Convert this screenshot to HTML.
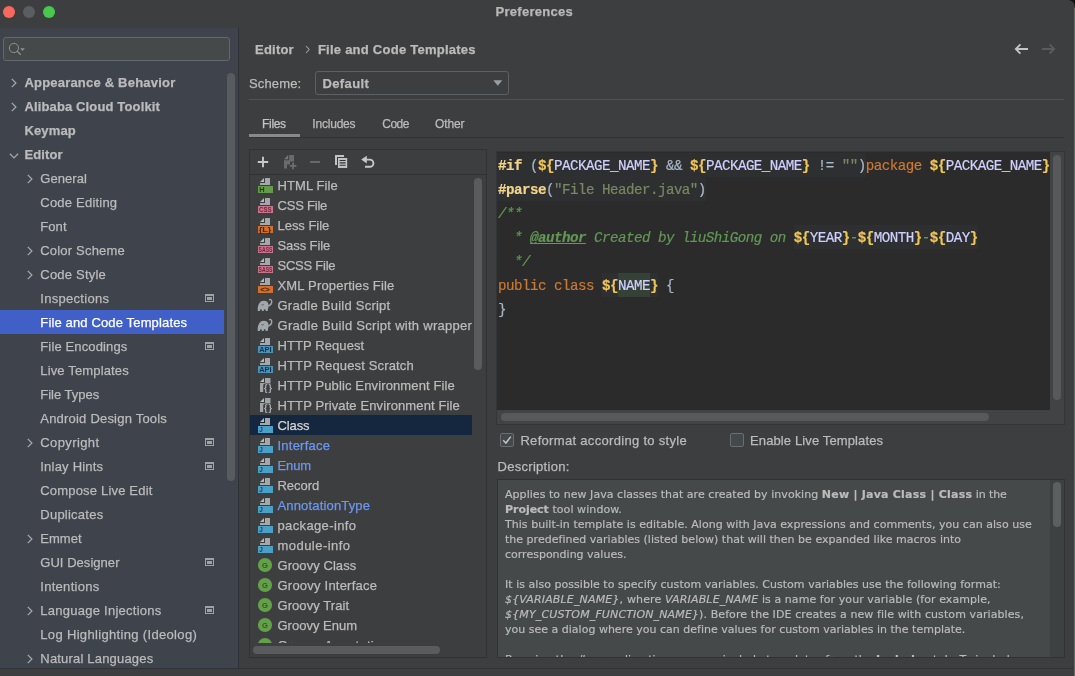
<!DOCTYPE html><html><head><meta charset="utf-8"><title>Preferences</title><style>
html,body{margin:0;padding:0}
body{width:1075px;height:676px;overflow:hidden;position:relative;background:#3d3e40;color:#bbbbbb;font-family:"Liberation Sans",sans-serif;font-size:13px}
#w{position:absolute;left:0;top:0;width:1075px;height:676px;overflow:hidden;will-change:transform;background:#3d3e40}
.t{position:absolute;white-space:pre;-webkit-text-stroke:0.25px currentColor}
.a{position:absolute}
svg{position:absolute;overflow:visible}
.code,.d{-webkit-text-stroke:0.2px currentColor}
.code{font-family:"Liberation Mono",monospace;font-size:14.2px;letter-spacing:-0.52px;line-height:24px;color:#a9b7c6;position:absolute;white-space:pre;left:498px}
.code b{font-weight:bold}
.d{position:absolute;white-space:pre;font-family:"DejaVu Sans",sans-serif;font-size:11px;line-height:15px;color:#bbbbbb;left:505px}
.y{color:#f0c55a;font-weight:bold}.dr{color:#f3d58a;font-weight:bold}.v{color:#d0d0ff}.s{color:#7a8760}.k{color:#cc7832}.c{color:#629755;font-style:italic}
</style></head><body><div id="w">
<div class="a" style="left:3px;top:6px;width:12px;height:12px;border-radius:6px;background:#f8695d"></div>
<div class="a" style="left:23px;top:6px;width:12px;height:12px;border-radius:6px;background:#5c5d60"></div>
<div class="a" style="left:43px;top:6px;width:12px;height:12px;border-radius:6px;background:#48c84e"></div>
<div class="t " style="left:495.5px;top:2.0px;line-height:20px;letter-spacing:0.278px;font-weight:bold;color:#b8b8b8;">Preferences</div>
<div class="a" style="left:0;top:28px;width:238px;height:640px;background:#3e434c"></div>
<div class="a" style="left:238px;top:28px;width:1px;height:640px;background:#2f3235"></div>
<div class="a" style="left:3px;top:37px;width:225px;height:22px;border:1px solid #65686b;border-radius:3px;background:#45494a"></div>
<svg style="left:6px;top:40px" width="22" height="18" viewBox="0 0 22 18"><circle cx="7.9" cy="8" r="4.6" fill="none" stroke="#8f9295" stroke-width="1"/><path d="M11.2 11.3 L14.8 14.8" stroke="#8f9295" stroke-width="1.2" fill="none"/><path d="M14.2 8.2 h4.6 l-2.3 2.8z" fill="#8f9295"/></svg>
<svg style="left:11px;top:78px" width="6" height="10" viewBox="0 0 6 10"><path d="M0.8 0.9 L4.9 5 L0.8 9.1" fill="none" stroke="#a3a7ab" stroke-width="1.3"/></svg>
<div class="t " style="left:24.4px;top:70.5px;line-height:24px;letter-spacing:0.207px;font-weight:bold;">Appearance &amp; Behavior</div>
<svg style="left:11px;top:102px" width="6" height="10" viewBox="0 0 6 10"><path d="M0.8 0.9 L4.9 5 L0.8 9.1" fill="none" stroke="#a3a7ab" stroke-width="1.3"/></svg>
<div class="t " style="left:24.4px;top:94.5px;line-height:24px;letter-spacing:0.141px;font-weight:bold;">Alibaba Cloud Toolkit</div>
<div class="t " style="left:24.4px;top:118.5px;line-height:24px;letter-spacing:0.154px;font-weight:bold;">Keymap</div>
<svg style="left:8.8px;top:153px" width="10" height="6" viewBox="0 0 10 6"><path d="M0.9 0.8 L5 4.9 L9.1 0.8" fill="none" stroke="#a3a7ab" stroke-width="1.3"/></svg>
<div class="t " style="left:24.4px;top:142.5px;line-height:24px;letter-spacing:0.108px;font-weight:bold;">Editor</div>
<svg style="left:27px;top:174px" width="6" height="10" viewBox="0 0 6 10"><path d="M0.8 0.9 L4.9 5 L0.8 9.1" fill="none" stroke="#a3a7ab" stroke-width="1.3"/></svg>
<div class="t " style="left:40.3px;top:166.5px;line-height:24px;letter-spacing:0.050px;">General</div>
<div class="t " style="left:40.3px;top:190.5px;line-height:24px;letter-spacing:0.213px;">Code Editing</div>
<div class="t " style="left:40.3px;top:214.5px;line-height:24px;letter-spacing:0.072px;">Font</div>
<svg style="left:27px;top:246px" width="6" height="10" viewBox="0 0 6 10"><path d="M0.8 0.9 L4.9 5 L0.8 9.1" fill="none" stroke="#a3a7ab" stroke-width="1.3"/></svg>
<div class="t " style="left:40.3px;top:238.5px;line-height:24px;letter-spacing:0.186px;">Color Scheme</div>
<svg style="left:27px;top:270px" width="6" height="10" viewBox="0 0 6 10"><path d="M0.8 0.9 L4.9 5 L0.8 9.1" fill="none" stroke="#a3a7ab" stroke-width="1.3"/></svg>
<div class="t " style="left:40.3px;top:262.5px;line-height:24px;letter-spacing:0.211px;">Code Style</div>
<div class="t " style="left:40.3px;top:286.5px;line-height:24px;letter-spacing:0.294px;">Inspections</div>
<svg style="left:205px;top:294px" width="9" height="8" viewBox="0 0 9 8"><rect width="9" height="8" fill="#9da2a8"/><rect x="1" y="2" width="7" height="5" fill="#3e434c"/><rect x="2" y="3" width="5" height="3" fill="#9da2a8"/></svg>
<div class="a" style="left:0;top:310px;width:224px;height:24px;background:#4060c8"></div>
<div class="t " style="left:40.3px;top:310.5px;line-height:24px;letter-spacing:0.143px;color:#ffffff;">File and Code Templates</div>
<div class="t " style="left:40.3px;top:334.5px;line-height:24px;letter-spacing:0.131px;">File Encodings</div>
<svg style="left:205px;top:342px" width="9" height="8" viewBox="0 0 9 8"><rect width="9" height="8" fill="#9da2a8"/><rect x="1" y="2" width="7" height="5" fill="#3e434c"/><rect x="2" y="3" width="5" height="3" fill="#9da2a8"/></svg>
<div class="t " style="left:40.3px;top:358.5px;line-height:24px;letter-spacing:0.149px;">Live Templates</div>
<div class="t " style="left:40.3px;top:382.5px;line-height:24px;letter-spacing:-0.004px;">File Types</div>
<div class="t " style="left:40.3px;top:406.5px;line-height:24px;letter-spacing:0.208px;">Android Design Tools</div>
<svg style="left:27px;top:438px" width="6" height="10" viewBox="0 0 6 10"><path d="M0.8 0.9 L4.9 5 L0.8 9.1" fill="none" stroke="#a3a7ab" stroke-width="1.3"/></svg>
<div class="t " style="left:40.3px;top:430.5px;line-height:24px;letter-spacing:0.396px;">Copyright</div>
<svg style="left:205px;top:438px" width="9" height="8" viewBox="0 0 9 8"><rect width="9" height="8" fill="#9da2a8"/><rect x="1" y="2" width="7" height="5" fill="#3e434c"/><rect x="2" y="3" width="5" height="3" fill="#9da2a8"/></svg>
<div class="t " style="left:40.3px;top:454.5px;line-height:24px;letter-spacing:0.210px;">Inlay Hints</div>
<svg style="left:205px;top:462px" width="9" height="8" viewBox="0 0 9 8"><rect width="9" height="8" fill="#9da2a8"/><rect x="1" y="2" width="7" height="5" fill="#3e434c"/><rect x="2" y="3" width="5" height="3" fill="#9da2a8"/></svg>
<div class="t " style="left:40.3px;top:478.5px;line-height:24px;letter-spacing:0.182px;">Compose Live Edit</div>
<div class="t " style="left:40.3px;top:502.5px;line-height:24px;letter-spacing:0.240px;">Duplicates</div>
<svg style="left:27px;top:534px" width="6" height="10" viewBox="0 0 6 10"><path d="M0.8 0.9 L4.9 5 L0.8 9.1" fill="none" stroke="#a3a7ab" stroke-width="1.3"/></svg>
<div class="t " style="left:40.3px;top:526.5px;line-height:24px;letter-spacing:0.006px;">Emmet</div>
<div class="t " style="left:40.3px;top:550.5px;line-height:24px;letter-spacing:0.038px;">GUI Designer</div>
<svg style="left:205px;top:558px" width="9" height="8" viewBox="0 0 9 8"><rect width="9" height="8" fill="#9da2a8"/><rect x="1" y="2" width="7" height="5" fill="#3e434c"/><rect x="2" y="3" width="5" height="3" fill="#9da2a8"/></svg>
<div class="t " style="left:40.3px;top:574.5px;line-height:24px;letter-spacing:0.283px;">Intentions</div>
<svg style="left:27px;top:606px" width="6" height="10" viewBox="0 0 6 10"><path d="M0.8 0.9 L4.9 5 L0.8 9.1" fill="none" stroke="#a3a7ab" stroke-width="1.3"/></svg>
<div class="t " style="left:40.3px;top:598.5px;line-height:24px;letter-spacing:0.254px;">Language Injections</div>
<svg style="left:205px;top:606px" width="9" height="8" viewBox="0 0 9 8"><rect width="9" height="8" fill="#9da2a8"/><rect x="1" y="2" width="7" height="5" fill="#3e434c"/><rect x="2" y="3" width="5" height="3" fill="#9da2a8"/></svg>
<div class="t " style="left:40.3px;top:622.5px;line-height:24px;letter-spacing:0.333px;">Log Highlighting (Ideolog)</div>
<svg style="left:27px;top:654px" width="6" height="10" viewBox="0 0 6 10"><path d="M0.8 0.9 L4.9 5 L0.8 9.1" fill="none" stroke="#a3a7ab" stroke-width="1.3"/></svg>
<div class="t " style="left:40.3px;top:646.5px;line-height:24px;letter-spacing:0.191px;">Natural Languages</div>
<div class="a" style="left:227px;top:73px;width:8px;height:408px;border-radius:4px;background:#585b60"></div>
<div class="a" style="left:0;top:668px;width:1075px;height:1px;background:#323537"></div>
<div class="a" style="left:0;top:669px;width:1075px;height:7px;background:#3d3e40"></div>
<div class="t " style="left:255.1px;top:40.2px;line-height:20px;letter-spacing:0.191px;font-weight:bold;">Editor</div>
<svg style="left:304.5px;top:45px" width="6" height="9" viewBox="0 0 6 9"><path d="M1 1 L4.2 4.5 L1 8" fill="none" stroke="#a0a0a0" stroke-width="1.1"/></svg>
<div class="t " style="left:317.9px;top:40.2px;line-height:20px;letter-spacing:0.249px;font-weight:bold;">File and Code Templates</div>
<svg style="left:1014px;top:43px" width="16" height="12" viewBox="0 0 16 12"><path d="M14 6 H2 M6.4 1.4 L1.8 6 L6.4 10.6" fill="none" stroke="#c4c4c4" stroke-width="1.8"/></svg>
<svg style="left:1041px;top:43px" width="16" height="12" viewBox="0 0 16 12"><path d="M1 6 H13 M8.6 1.4 L13.2 6 L8.6 10.6" fill="none" stroke="#5a5c5e" stroke-width="1.8"/></svg>
<div class="t " style="left:249.0px;top:74.0px;line-height:20px;letter-spacing:0.143px;">Scheme:</div>
<div class="a" style="left:315px;top:71px;width:192px;height:22px;border:1px solid #5e6163;border-radius:3px;background:#3d3e40"></div>
<div class="t " style="left:322.5px;top:74.0px;line-height:20px;letter-spacing:0.377px;font-weight:bold;">Default</div>
<svg style="left:493px;top:80px" width="10" height="6" viewBox="0 0 10 6"><path d="M0.3 0.3 H9.3 L4.8 5.8z" fill="#9a9d9f"/></svg>
<div class="a" style="left:249px;top:99px;width:815px;height:1px;background:#505355"></div>
<div class="t " style="left:262.1px;top:113.5px;line-height:20px;letter-spacing:-0.327px;font-size:12px;color:#c4c4c4;">Files</div>
<div class="t " style="left:312.3px;top:113.5px;line-height:20px;letter-spacing:-0.199px;font-size:12px;">Includes</div>
<div class="t " style="left:382.3px;top:113.5px;line-height:20px;letter-spacing:-0.522px;font-size:12px;">Code</div>
<div class="t " style="left:435.1px;top:113.5px;line-height:20px;letter-spacing:-0.182px;font-size:12px;">Other</div>
<div class="a" style="left:249px;top:137px;width:815px;height:1px;background:#323232"></div>
<div class="a" style="left:249px;top:134px;width:51px;height:3px;background:#87898b"></div>
<div class="a" style="left:249px;top:149px;width:236px;height:507px;border:1px solid #323232;background:#3d3e40"></div>
<div class="a" style="left:250px;top:174px;width:236px;height:1px;background:#323232"></div>
<svg style="left:256px;top:155px" width="14" height="14" viewBox="0 0 14 14"><path d="M7 1.8 V12.2 M1.8 7 H12.2" stroke="#c8c8c8" stroke-width="1.9" fill="none"/></svg>
<svg style="left:283px;top:154px" width="16" height="16" viewBox="0 0 16 16"><path d="M5.2 1 L1 5.2 h4.2z" fill="#77797b"/><path d="M6.2 1 h4.8 v6.5 h-4 v3 h-3 v4 h-3 v-8.3 h5.2z" fill="#696b6d"/><path d="M10.1 8.6 v6.6 M6.8 11.9 h6.6" stroke="#6c6e70" stroke-width="1.8" fill="none"/></svg>
<div class="a" style="left:310px;top:161px;width:10px;height:2px;background:#66686a"></div>
<svg style="left:334px;top:154px" width="14" height="15" viewBox="0 0 14 15"><path d="M1 1 h9 v2 h-7 v8 h-2z" fill="#c2c2c2"/><rect x="4" y="4" width="9.2" height="10" fill="#c2c2c2"/><path d="M5.6 6.5 h6 M5.6 8.9 h6 M5.6 11.3 h6" stroke="#303133" stroke-width="1.1"/></svg>
<svg style="left:360px;top:154px" width="16" height="15" viewBox="0 0 16 15"><path d="M6 5.6 H9.8 A3.6 3.6 0 0 1 9.8 12.8 H5" fill="none" stroke="#c8c8c8" stroke-width="1.9"/><path d="M1.2 5.6 L6.8 1.7 V9.5z" fill="#c8c8c8"/></svg>
<div class="a" style="left:250px;top:175px;width:236px;height:468px;overflow:hidden">
<svg style="left:7px;top:2px" width="16" height="16" viewBox="0 0 16 16"><path d="M7 1 L3 5 h4z" fill="#b6babd"/><path d="M8 1 v5 h-5 v2 h10 v-7z" fill="#a4a8ab"/><rect x="1" y="9" width="15" height="7" fill="#649b4b"/><text x="2.2" y="15.3" font-family="Liberation Sans, sans-serif" font-weight="bold" font-size="7.4" fill="#1c4512">H</text></svg>
<div class="t" style="left:27.5px;top:1.0px;line-height:20px;letter-spacing:0.084px;">HTML File</div>
<svg style="left:7px;top:22px" width="16" height="16" viewBox="0 0 16 16"><path d="M7 1 L3 5 h4z" fill="#b6babd"/><path d="M8 1 v5 h-5 v2 h10 v-7z" fill="#a4a8ab"/><rect x="1" y="9" width="15" height="7" fill="#c7768a"/><text x="2" y="15.3" font-family="Liberation Sans, sans-serif" font-weight="bold" font-size="7.4" textLength="12.6" lengthAdjust="spacingAndGlyphs" fill="#7a1f3a">CSS</text></svg>
<div class="t" style="left:27.5px;top:21.0px;line-height:20px;letter-spacing:-0.211px;">CSS File</div>
<svg style="left:7px;top:42px" width="16" height="16" viewBox="0 0 16 16"><path d="M7 1 L3 5 h4z" fill="#b6babd"/><path d="M8 1 v5 h-5 v2 h10 v-7z" fill="#a4a8ab"/><rect x="1" y="9" width="15" height="7" fill="#cf7030"/><text x="1.8" y="15.3" font-family="Liberation Sans, sans-serif" font-weight="bold" font-size="6.4" textLength="12.6" lengthAdjust="spacingAndGlyphs" fill="#4f2306">{L}</text></svg>
<div class="t" style="left:27.5px;top:41.0px;line-height:20px;letter-spacing:-0.035px;">Less File</div>
<svg style="left:7px;top:62px" width="16" height="16" viewBox="0 0 16 16"><path d="M7 1 L3 5 h4z" fill="#b6babd"/><path d="M8 1 v5 h-5 v2 h10 v-7z" fill="#a4a8ab"/><rect x="1" y="9" width="15" height="7" fill="#c7768a"/><text x="1.6" y="15.3" font-family="Liberation Sans, sans-serif" font-weight="bold" font-size="7.4" textLength="13.8" lengthAdjust="spacingAndGlyphs" fill="#7a1f3a">SASS</text></svg>
<div class="t" style="left:27.5px;top:61.0px;line-height:20px;letter-spacing:-0.084px;">Sass File</div>
<svg style="left:7px;top:82px" width="16" height="16" viewBox="0 0 16 16"><path d="M7 1 L3 5 h4z" fill="#b6babd"/><path d="M8 1 v5 h-5 v2 h10 v-7z" fill="#a4a8ab"/><rect x="1" y="9" width="15" height="7" fill="#c7768a"/><text x="1.6" y="15.3" font-family="Liberation Sans, sans-serif" font-weight="bold" font-size="7.4" textLength="13.8" lengthAdjust="spacingAndGlyphs" fill="#7a1f3a">SASS</text></svg>
<div class="t" style="left:27.5px;top:81.0px;line-height:20px;letter-spacing:-0.240px;">SCSS File</div>
<svg style="left:7px;top:102px" width="16" height="16" viewBox="0 0 16 16"><path d="M7 1 L3 5 h4z" fill="#b6babd"/><path d="M8 1 v5 h-5 v2 h10 v-7z" fill="#a4a8ab"/><rect x="1" y="9" width="15" height="7" fill="#cf7030"/><text x="3.2" y="15.3" font-family="Liberation Sans, sans-serif" font-weight="bold" font-size="7.4" textLength="9.6" lengthAdjust="spacingAndGlyphs" fill="#4f2306">&lt;&gt;</text></svg>
<div class="t" style="left:27.5px;top:101.0px;line-height:20px;letter-spacing:0.176px;">XML Properties File</div>
<svg style="left:7px;top:122px" width="16" height="16" viewBox="0 0 16 16"><path d="M0.8 14 C0.3 10 1.4 6.4 3.8 4.6 C5.6 3.3 8.5 3.3 10.2 4.8 C11.3 5.9 11.7 7.4 11.5 9 C11.3 11 10.9 12.5 10.6 14 H8.7 C8.7 12.8 8.3 12.2 7.7 12.2 C7.1 12.2 6.7 12.8 6.7 14 H4.9 C4.9 12.8 4.5 12.2 3.9 12.2 C3.3 12.2 2.9 12.8 2.9 14 Z" fill="#a2a7ab"/><path d="M10.6 9.4 C13.4 8.4 15 6.2 14.7 4 C14.5 2.5 13.1 2 12.1 2.9" fill="none" stroke="#a2a7ab" stroke-width="1.4"/><path d="M4.3 7.6 q1.2 1 2.6 -0.2" stroke="#55595c" stroke-width="0.8" fill="none"/></svg>
<div class="t" style="left:27.5px;top:121.0px;line-height:20px;letter-spacing:0.238px;">Gradle Build Script</div>
<svg style="left:7px;top:142px" width="16" height="16" viewBox="0 0 16 16"><path d="M0.8 14 C0.3 10 1.4 6.4 3.8 4.6 C5.6 3.3 8.5 3.3 10.2 4.8 C11.3 5.9 11.7 7.4 11.5 9 C11.3 11 10.9 12.5 10.6 14 H8.7 C8.7 12.8 8.3 12.2 7.7 12.2 C7.1 12.2 6.7 12.8 6.7 14 H4.9 C4.9 12.8 4.5 12.2 3.9 12.2 C3.3 12.2 2.9 12.8 2.9 14 Z" fill="#a2a7ab"/><path d="M10.6 9.4 C13.4 8.4 15 6.2 14.7 4 C14.5 2.5 13.1 2 12.1 2.9" fill="none" stroke="#a2a7ab" stroke-width="1.4"/><path d="M4.3 7.6 q1.2 1 2.6 -0.2" stroke="#55595c" stroke-width="0.8" fill="none"/></svg>
<div class="t" style="left:27.5px;top:141.0px;line-height:20px;letter-spacing:0.282px;">Gradle Build Script with wrapper</div>
<svg style="left:7px;top:162px" width="16" height="16" viewBox="0 0 16 16"><path d="M7 1 L3 5 h4z" fill="#b6babd"/><path d="M8 1 v5 h-5 v2 h10 v-7z" fill="#a4a8ab"/><rect x="1" y="9" width="15" height="7" fill="#4c92b6"/><text x="2.2" y="15.3" font-family="Liberation Sans, sans-serif" font-weight="bold" font-size="7.4" textLength="12.4" lengthAdjust="spacingAndGlyphs" fill="#143456">API</text></svg>
<div class="t" style="left:27.5px;top:161.0px;line-height:20px;letter-spacing:0.086px;">HTTP Request</div>
<svg style="left:7px;top:182px" width="16" height="16" viewBox="0 0 16 16"><path d="M7 1 L3 5 h4z" fill="#b6babd"/><path d="M8 1 v5 h-5 v2 h10 v-7z" fill="#a4a8ab"/><rect x="1" y="9" width="15" height="7" fill="#4c92b6"/><text x="2.2" y="15.3" font-family="Liberation Sans, sans-serif" font-weight="bold" font-size="7.4" textLength="12.4" lengthAdjust="spacingAndGlyphs" fill="#143456">API</text></svg>
<div class="t" style="left:27.5px;top:181.0px;line-height:20px;letter-spacing:0.147px;">HTTP Request Scratch</div>
<svg style="left:7px;top:202px" width="16" height="16" viewBox="0 0 16 16"><path d="M7 1 L3 5 h4z" fill="#b6babd"/><path d="M8 1 v5 h-5 v9 h10.5 v-14z" fill="#a0a4a7"/><rect x="6.2" y="6.6" width="10.6" height="9.8" rx="2" fill="#3d3e40"/><text x="11.6" y="14.3" text-anchor="middle" font-family="Liberation Sans, sans-serif" font-weight="bold" font-size="9" fill="#b0b4b8" letter-spacing="1.2">{}</text></svg>
<div class="t" style="left:27.5px;top:201.0px;line-height:20px;letter-spacing:0.128px;">HTTP Public Environment File</div>
<svg style="left:7px;top:222px" width="16" height="16" viewBox="0 0 16 16"><path d="M7 1 L3 5 h4z" fill="#b6babd"/><path d="M8 1 v5 h-5 v9 h10.5 v-14z" fill="#a0a4a7"/><rect x="6.2" y="6.6" width="10.6" height="9.8" rx="2" fill="#3d3e40"/><text x="11.6" y="14.3" text-anchor="middle" font-family="Liberation Sans, sans-serif" font-weight="bold" font-size="9" fill="#b0b4b8" letter-spacing="1.2">{}</text></svg>
<div class="t" style="left:27.5px;top:221.0px;line-height:20px;letter-spacing:0.119px;">HTTP Private Environment File</div>
<div class="a" style="left:0;top:240px;width:222px;height:20px;background:#14273f"></div>
<svg style="left:7px;top:242px" width="16" height="16" viewBox="0 0 16 16"><path d="M7 1 L3 5 h4z" fill="#b6babd"/><path d="M8 1 v5 h-5 v2 h10 v-7z" fill="#a4a8ab"/><rect x="1" y="9" width="15" height="7" fill="#4aa0c6"/><text x="2.2" y="15.3" font-family="Liberation Sans, sans-serif" font-weight="bold" font-size="6.4" fill="#17405e">J</text></svg>
<div class="t" style="left:27.5px;top:241.0px;line-height:20px;letter-spacing:-0.121px;color:#d4d4d4;">Class</div>
<svg style="left:7px;top:262px" width="16" height="16" viewBox="0 0 16 16"><path d="M7 1 L3 5 h4z" fill="#b6babd"/><path d="M8 1 v5 h-5 v2 h10 v-7z" fill="#a4a8ab"/><rect x="1" y="9" width="15" height="7" fill="#4aa0c6"/><text x="2.2" y="15.3" font-family="Liberation Sans, sans-serif" font-weight="bold" font-size="6.4" fill="#17405e">J</text></svg>
<div class="t" style="left:27.5px;top:261.0px;line-height:20px;letter-spacing:0.235px;color:#6c98f0;">Interface</div>
<svg style="left:7px;top:282px" width="16" height="16" viewBox="0 0 16 16"><path d="M7 1 L3 5 h4z" fill="#b6babd"/><path d="M8 1 v5 h-5 v2 h10 v-7z" fill="#a4a8ab"/><rect x="1" y="9" width="15" height="7" fill="#4aa0c6"/><text x="2.2" y="15.3" font-family="Liberation Sans, sans-serif" font-weight="bold" font-size="6.4" fill="#17405e">J</text></svg>
<div class="t" style="left:27.5px;top:281.0px;line-height:20px;letter-spacing:-0.090px;color:#6c98f0;">Enum</div>
<svg style="left:7px;top:302px" width="16" height="16" viewBox="0 0 16 16"><path d="M7 1 L3 5 h4z" fill="#b6babd"/><path d="M8 1 v5 h-5 v2 h10 v-7z" fill="#a4a8ab"/><rect x="1" y="9" width="15" height="7" fill="#4aa0c6"/><text x="2.2" y="15.3" font-family="Liberation Sans, sans-serif" font-weight="bold" font-size="6.4" fill="#17405e">J</text></svg>
<div class="t" style="left:27.5px;top:301.0px;line-height:20px;letter-spacing:-0.018px;">Record</div>
<svg style="left:7px;top:322px" width="16" height="16" viewBox="0 0 16 16"><path d="M7 1 L3 5 h4z" fill="#b6babd"/><path d="M8 1 v5 h-5 v2 h10 v-7z" fill="#a4a8ab"/><rect x="1" y="9" width="15" height="7" fill="#4aa0c6"/><text x="2.2" y="15.3" font-family="Liberation Sans, sans-serif" font-weight="bold" font-size="6.4" fill="#17405e">J</text></svg>
<div class="t" style="left:27.5px;top:321.0px;line-height:20px;letter-spacing:0.161px;color:#6c98f0;">AnnotationType</div>
<svg style="left:7px;top:342px" width="16" height="16" viewBox="0 0 16 16"><path d="M7 1 L3 5 h4z" fill="#b6babd"/><path d="M8 1 v5 h-5 v2 h10 v-7z" fill="#a4a8ab"/><rect x="1" y="9" width="15" height="7" fill="#4aa0c6"/><text x="2.2" y="15.3" font-family="Liberation Sans, sans-serif" font-weight="bold" font-size="6.4" fill="#17405e">J</text></svg>
<div class="t" style="left:27.5px;top:341.0px;line-height:20px;letter-spacing:0.363px;">package-info</div>
<svg style="left:7px;top:362px" width="16" height="16" viewBox="0 0 16 16"><path d="M7 1 L3 5 h4z" fill="#b6babd"/><path d="M8 1 v5 h-5 v2 h10 v-7z" fill="#a4a8ab"/><rect x="1" y="9" width="15" height="7" fill="#4aa0c6"/><text x="2.2" y="15.3" font-family="Liberation Sans, sans-serif" font-weight="bold" font-size="6.4" fill="#17405e">J</text></svg>
<div class="t" style="left:27.5px;top:361.0px;line-height:20px;letter-spacing:0.461px;">module-info</div>
<svg style="left:7px;top:382px" width="16" height="16" viewBox="0 0 16 16"><circle cx="8" cy="8" r="7.1" fill="#63a149"/><text x="8" y="10.9" text-anchor="middle" font-family="Liberation Sans, sans-serif" font-weight="bold" font-size="7.6" fill="#2f5a1c">G</text></svg>
<div class="t" style="left:27.5px;top:381.0px;line-height:20px;letter-spacing:0.065px;">Groovy Class</div>
<svg style="left:7px;top:402px" width="16" height="16" viewBox="0 0 16 16"><circle cx="8" cy="8" r="7.1" fill="#63a149"/><text x="8" y="10.9" text-anchor="middle" font-family="Liberation Sans, sans-serif" font-weight="bold" font-size="7.6" fill="#2f5a1c">G</text></svg>
<div class="t" style="left:27.5px;top:401.0px;line-height:20px;letter-spacing:0.219px;">Groovy Interface</div>
<svg style="left:7px;top:422px" width="16" height="16" viewBox="0 0 16 16"><circle cx="8" cy="8" r="7.1" fill="#63a149"/><text x="8" y="10.9" text-anchor="middle" font-family="Liberation Sans, sans-serif" font-weight="bold" font-size="7.6" fill="#2f5a1c">G</text></svg>
<div class="t" style="left:27.5px;top:421.0px;line-height:20px;letter-spacing:0.064px;">Groovy Trait</div>
<svg style="left:7px;top:442px" width="16" height="16" viewBox="0 0 16 16"><circle cx="8" cy="8" r="7.1" fill="#63a149"/><text x="8" y="10.9" text-anchor="middle" font-family="Liberation Sans, sans-serif" font-weight="bold" font-size="7.6" fill="#2f5a1c">G</text></svg>
<div class="t" style="left:27.5px;top:441.0px;line-height:20px;letter-spacing:0.002px;">Groovy Enum</div>
<svg style="left:7px;top:462px" width="16" height="16" viewBox="0 0 16 16"><circle cx="8" cy="8" r="7.1" fill="#63a149"/><text x="8" y="10.9" text-anchor="middle" font-family="Liberation Sans, sans-serif" font-weight="bold" font-size="7.6" fill="#2f5a1c">G</text></svg>
<div class="t" style="left:27.5px;top:461.0px;line-height:20px;letter-spacing:0.266px;">Groovy Annotation</div>
</div>
<div class="a" style="left:474px;top:178px;width:8px;height:192px;border-radius:4px;background:#595b5d"></div>
<div class="a" style="left:253px;top:646px;width:187px;height:8px;border-radius:4px;background:#595b5d"></div>
<div class="a" style="left:496px;top:151px;width:569px;height:274px;background:#414344;border:1px solid #333537;box-sizing:border-box"></div>
<div class="a" style="left:497px;top:152px;width:553px;height:258px;background:#2b2b2b"></div>
<div class="a" style="left:497px;top:153px;width:369px;height:24px;background:#2e2f31"></div>
<div class="a" style="left:497px;top:177px;width:209px;height:24px;background:#2e2f31"></div>
<div class="a" style="left:794px;top:225px;width:184px;height:24px;background:#2e2f31"></div>
<div class="a" style="left:602px;top:273px;width:56px;height:24px;background:#2e2f31"></div>
<div class="a" style="left:618px;top:273px;width:32px;height:24px;background:#344134"></div>
<div class="code" style="top:153.5px"><span class="dr">#if</span> (<span class="y">${</span><span class="v">PACKAGE_NAME</span><span class="y">}</span> &amp;&amp; <span class="y">${</span><span class="v">PACKAGE_NAME</span><span class="y">}</span> != <span class="s">""</span>)<span class="k">package</span> <span class="y">${</span><span class="v">PACKAGE_NAME</span><span class="y">}</span></div>
<div class="code" style="top:177.5px"><span class="dr">#parse</span>(<span class="s">"File Header.java"</span>)</div>
<div class="code" style="top:201.5px"><span class="c">/**</span></div>
<div class="code" style="top:225.5px"><span class="c">  * <b style="text-decoration:underline;text-decoration-skip-ink:none">@author</b> Created by liuShiGong on </span><span class="y">${</span><span class="v">YEAR</span><span class="y">}</span><span class="c">-</span><span class="y">${</span><span class="v">MONTH</span><span class="y">}</span><span class="c">-</span><span class="y">${</span><span class="v">DAY</span><span class="y">}</span></div>
<div class="code" style="top:249.5px"><span class="c">  */</span></div>
<div class="code" style="top:273.5px"><span class="k">public class</span> <span class="y">${</span><span class="v">NAME</span><span class="y">}</span> {</div>
<div class="code" style="top:297.5px">}</div>
<div class="a" style="left:1053px;top:155px;width:8px;height:245px;border-radius:4px;background:#57595b"></div>
<div class="a" style="left:501px;top:413px;width:488px;height:8px;border-radius:4px;background:#57595b"></div>
<div class="a" style="left:500px;top:433px;width:12px;height:12px;border:1px solid #6b6e70;border-radius:2px;background:#43494a"></div>
<svg style="left:500px;top:433px" width="14" height="14" viewBox="0 0 14 14"><path d="M3.2 7.2 L5.9 10 L10.8 3.6" fill="none" stroke="#c4c4c4" stroke-width="1.5"/></svg>
<div class="t " style="left:520.4px;top:431.0px;line-height:20px;letter-spacing:0.314px;">Reformat according to style</div>
<div class="a" style="left:730px;top:433px;width:12px;height:12px;border:1px solid #6b6e70;border-radius:2px;background:#43494a"></div>
<div class="t " style="left:750.0px;top:431.0px;line-height:20px;letter-spacing:0.124px;">Enable Live Templates</div>
<div class="t " style="left:497.6px;top:457.0px;line-height:20px;letter-spacing:0.280px;">Description:</div>
<div class="a" style="left:497px;top:479px;width:566px;height:177px;border:1px solid #323232;background:#45494a;overflow:hidden"></div>
<div class="a" style="left:0;top:480px;width:1064px;height:177px;overflow:hidden">
<div class="d" style="top:6.5px"><span style="letter-spacing:0.048px">Applies to new Java classes that are created by invoking </span><b style="letter-spacing:0.232px">New | Java Class | Class</b><span style="letter-spacing:-0.068px"> in the</span></div>
<div class="d" style="top:21.5px"><b style="letter-spacing:-0.036px">Project</b><span style="letter-spacing:0.081px"> tool window.</span></div>
<div class="d" style="top:36.5px"><span style="letter-spacing:0.038px">This built-in template is editable. Along with Java expressions and comments, you can also use</span></div>
<div class="d" style="top:51.5px"><span style="letter-spacing:0.018px">the predefined variables (listed below) that will then be expanded like macros into</span></div>
<div class="d" style="top:66.5px"><span style="letter-spacing:0.003px">corresponding values.</span></div>
<div class="d" style="top:96.5px"><span style="letter-spacing:0.035px">It is also possible to specify custom variables. Custom variables use the following format:</span></div>
<div class="d" style="top:111.5px"><i style="letter-spacing:0.161px">${VARIABLE_NAME}</i><span style="letter-spacing:0.153px">, where </span><i style="letter-spacing:0.167px">VARIABLE_NAME</i><span style="letter-spacing:0.074px"> is a name for your variable (for example,</span></div>
<div class="d" style="top:126.5px"><i style="letter-spacing:0.134px">${MY_CUSTOM_FUNCTION_NAME}</i><span style="letter-spacing:0.087px">). Before the IDE creates a new file with custom variables,</span></div>
<div class="d" style="top:141.5px"><span style="letter-spacing:0.008px">you see a dialog where you can define values for custom variables in the template.</span></div>
<div class="d" style="top:171.5px"><span style="letter-spacing:0.009px">By using the #parse directive, you can include templates from the </span><b style="letter-spacing:0.172px">Includes</b><span style="letter-spacing:0.267px"> tab. To include a</span></div>
</div>
<div class="a" style="left:1050px;top:480px;width:14px;height:177px;background:#3e4142"></div>
<div class="a" style="left:1053px;top:482px;width:8px;height:45px;border-radius:4px;background:#5c5f60"></div>
<div class="a" style="left:1074px;top:8px;width:1px;height:668px;background:#6a6a6a"></div>
<svg style="left:1065px;top:0" width="10" height="10" viewBox="0 0 10 10"><path d="M3 0 H10 V7 A7 7 0 0 0 3 0z" fill="#101010"/></svg>
</div></body></html>
